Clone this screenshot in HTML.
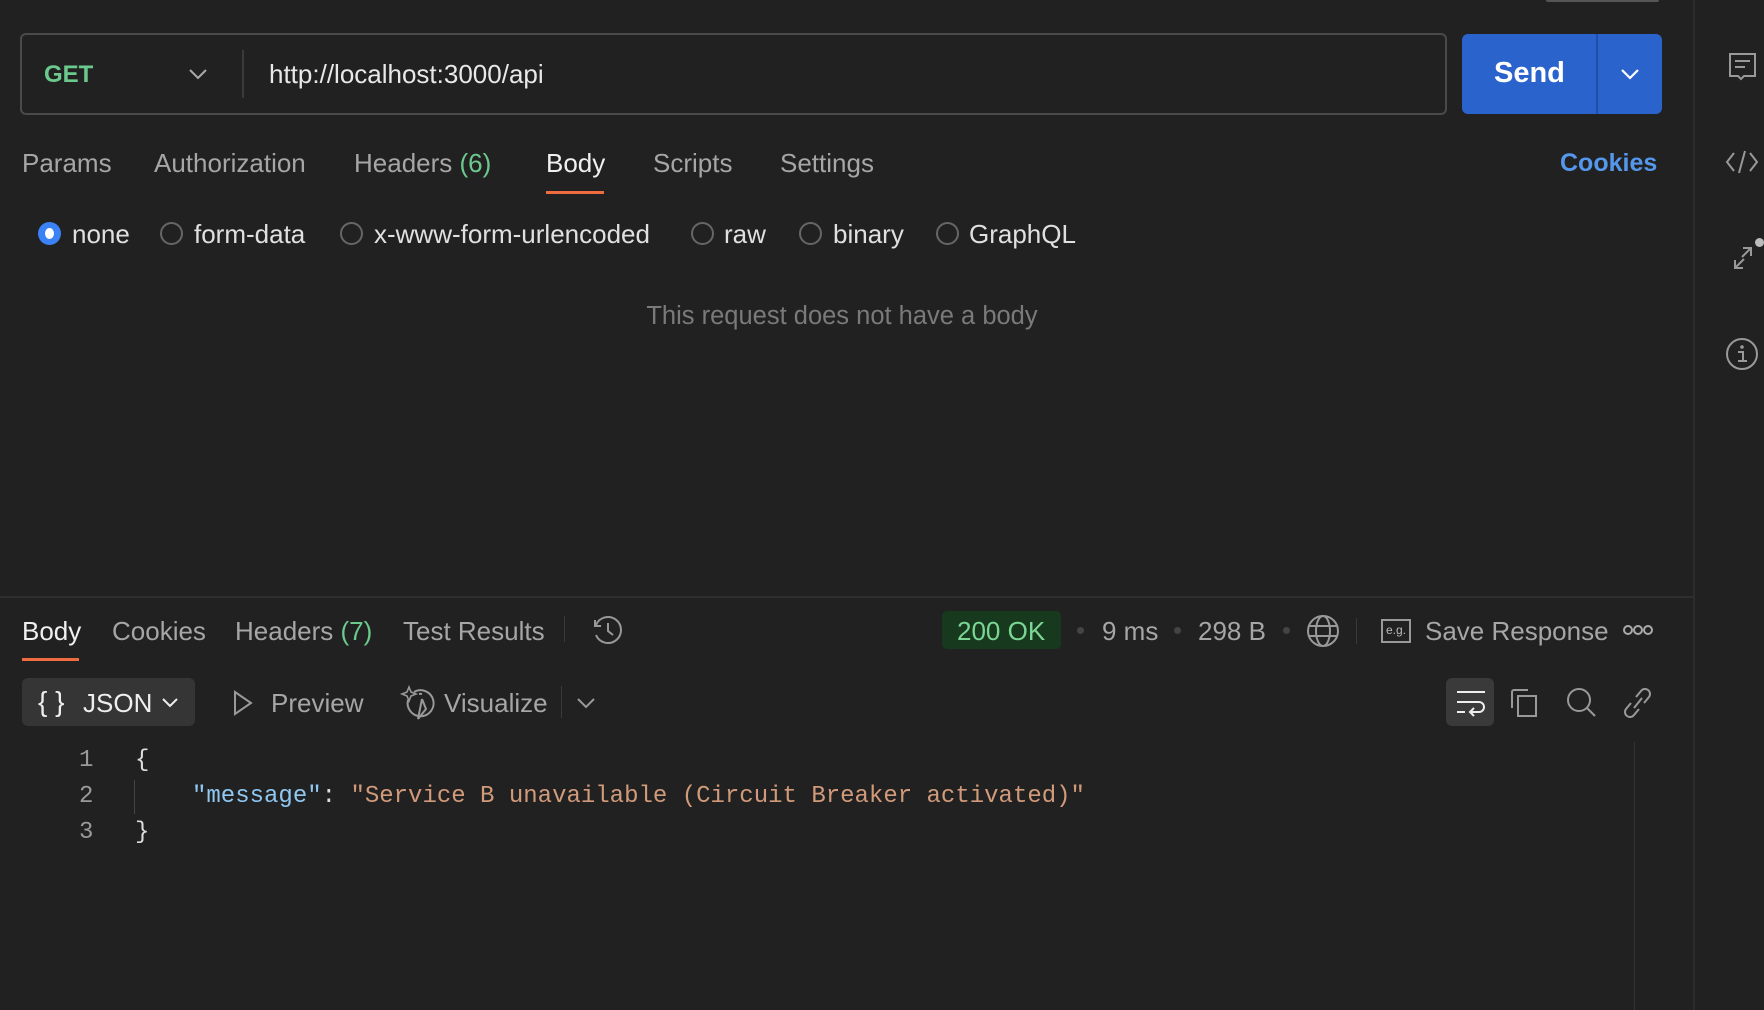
<!DOCTYPE html>
<html><head><meta charset="utf-8"><style>
*{margin:0;padding:0;box-sizing:border-box}
body{width:1764px;height:1010px;background:#212121;font-family:"Liberation Sans",sans-serif;color:#a6a6a6;position:relative;overflow:hidden}
.a{position:absolute;white-space:nowrap}
.t{font-size:26px;line-height:30px}
.m{position:absolute;font-family:"Liberation Mono",monospace;font-size:24px;line-height:30px;white-space:pre}
svg{position:absolute;overflow:visible}
</style></head><body>
<div class="a" style="left:1546px;top:0;width:113px;height:2px;background:#555;border-radius:0 0 2px 2px"></div>
<div class="a" style="left:20px;top:33px;width:1427px;height:82px;border:2px solid #4a4a4a;border-radius:6px"></div>
<div class="a" style="left:44px;top:61px;font-size:24px;font-weight:bold;color:#6cc98e">GET</div>
<svg style="left:189px;top:69px" width="18" height="10"><path d="M1 1l8 8 8-8" fill="none" stroke="#aaa" stroke-width="2"/></svg>
<div class="a" style="left:242px;top:50px;width:2px;height:48px;background:#3a3a3a"></div>
<div class="a" style="left:269px;top:59px;font-size:26px;color:#e8e8e8">http://localhost:3000/api</div>
<div class="a" style="left:1462px;top:34px;width:200px;height:80px;background:#2a63cc;border-radius:6px"></div>
<div class="a" style="left:1596px;top:34px;width:2px;height:80px;background:#1f4fa8"></div>
<div class="a" style="left:1494px;top:57px;font-size:29px;font-weight:bold;color:#fff">Send</div>
<svg style="left:1621px;top:69px" width="18" height="10"><path d="M1 1l8 8 8-8" fill="none" stroke="#fff" stroke-width="2.2"/></svg>
<div class="a" style="left:1693px;top:0;width:2px;height:1010px;background:#2c2c2c"></div>
<svg style="left:1728px;top:52px" width="28" height="28"><path d="M2 2h25v22h-11l-3 3-3-3h-8z M7 9h15 M7 15h10" fill="none" stroke="#999" stroke-width="2"/></svg>
<svg style="left:1726px;top:150px" width="32" height="24"><path d="M8 3l-7 9 7 9 M24 3l7 9-7 9 M19 1l-6 22" fill="none" stroke="#999" stroke-width="2"/></svg>
<svg style="left:1732px;top:246px" width="22" height="24"><path d="M10 11l9-9 M11 2h8v8 M12 13l-9 9 M3 14v8h8" fill="none" stroke="#999" stroke-width="2"/></svg>
<div class="a" style="left:1755px;top:238px;width:9px;height:9px;border-radius:50%;background:#bbb"></div>
<svg style="left:1726px;top:338px" width="32" height="32"><circle cx="16" cy="16" r="15" fill="none" stroke="#999" stroke-width="2"/><circle cx="16" cy="9" r="1.8" fill="#999"/><path d="M12 14h5v9 M12 23h9" fill="none" stroke="#999" stroke-width="2"/></svg>
<div class="a t" style="left:22px;top:148px">Params</div>
<div class="a t" style="left:154px;top:148px">Authorization</div>
<div class="a t" style="left:354px;top:148px">Headers <span style="color:#6cc98e">(6)</span></div>
<div class="a t" style="left:546px;top:148px;color:#f0f0f0">Body</div>
<div class="a" style="left:546px;top:191px;width:58px;height:3px;background:#ef6c40"></div>
<div class="a t" style="left:653px;top:148px">Scripts</div>
<div class="a t" style="left:780px;top:148px">Settings</div>
<div class="a t" style="left:1560px;top:148px;color:#5597ea;font-weight:bold;font-size:25px">Cookies</div>
<div class="a" style="left:38px;top:222px;width:23px;height:23px;border-radius:50%;background:#3b82f6"></div>
<div class="a" style="left:45px;top:228px;width:9px;height:11px;border-radius:50%;background:#fff"></div>
<div class="a t" style="left:72px;top:219px;color:#e0e0e0">none</div>
<div class="a" style="left:160px;top:222px;width:23px;height:23px;border-radius:50%;border:2px solid #666"></div>
<div class="a t" style="left:194px;top:219px;color:#e0e0e0">form-data</div>
<div class="a" style="left:340px;top:222px;width:23px;height:23px;border-radius:50%;border:2px solid #666"></div>
<div class="a t" style="left:374px;top:219px;color:#e0e0e0">x-www-form-urlencoded</div>
<div class="a" style="left:691px;top:222px;width:23px;height:23px;border-radius:50%;border:2px solid #666"></div>
<div class="a t" style="left:724px;top:219px;color:#e0e0e0">raw</div>
<div class="a" style="left:799px;top:222px;width:23px;height:23px;border-radius:50%;border:2px solid #666"></div>
<div class="a t" style="left:833px;top:219px;color:#e0e0e0">binary</div>
<div class="a" style="left:936px;top:222px;width:23px;height:23px;border-radius:50%;border:2px solid #666"></div>
<div class="a t" style="left:969px;top:219px;color:#e0e0e0">GraphQL</div>
<div class="a" style="left:0;top:302px;width:1684px;text-align:center;font-size:25.5px;color:#7a7a7a">This request does not have a body</div>
<div class="a" style="left:0;top:596px;width:1693px;height:2px;background:#2e2e2e"></div>
<div class="a t" style="left:22px;top:616px;color:#f0f0f0">Body</div>
<div class="a" style="left:22px;top:658px;width:57px;height:3px;background:#ef6c40"></div>
<div class="a t" style="left:112px;top:616px">Cookies</div>
<div class="a t" style="left:235px;top:616px">Headers <span style="color:#6cc98e">(7)</span></div>
<div class="a t" style="left:403px;top:616px">Test Results</div>
<div class="a" style="left:564px;top:616px;width:1px;height:26px;background:#3a3a3a"></div>
<svg style="left:592px;top:615px" width="30" height="30"><path d="M4 10A13 13 0 1 1 4 20 M3 5v6h6 M16 8v8l5 4" fill="none" stroke="#999" stroke-width="2"/></svg>
<div class="a" style="left:942px;top:611px;width:119px;height:38px;background:#173a1f;border-radius:5px"></div>
<div class="a t" style="left:957px;top:616px;color:#7bd694">200 OK</div>
<div class="a" style="left:1077px;top:627px;width:7px;height:7px;border-radius:50%;background:#444"></div>
<div class="a t" style="left:1102px;top:616px">9 ms</div>
<div class="a" style="left:1174px;top:627px;width:7px;height:7px;border-radius:50%;background:#444"></div>
<div class="a t" style="left:1198px;top:616px">298 B</div>
<div class="a" style="left:1283px;top:627px;width:7px;height:7px;border-radius:50%;background:#444"></div>
<svg style="left:1307px;top:615px" width="32" height="32"><circle cx="16" cy="16" r="15" fill="none" stroke="#999" stroke-width="2"/><ellipse cx="16" cy="16" rx="7" ry="15" fill="none" stroke="#999" stroke-width="2"/><path d="M2 11h28 M2 21h28" stroke="#999" stroke-width="2"/></svg>
<div class="a" style="left:1356px;top:618px;width:1px;height:26px;background:#3a3a3a"></div>
<div class="a" style="left:1381px;top:619px;width:30px;height:24px;border:2px solid #999;font-size:12px;line-height:19px;text-align:center;color:#bbb">e.g.</div>
<div class="a t" style="left:1425px;top:616px">Save Response</div>
<svg style="left:1623px;top:624px" width="30" height="12"><circle cx="5" cy="6" r="4" fill="none" stroke="#aaa" stroke-width="2"/><circle cx="15" cy="6" r="4" fill="none" stroke="#aaa" stroke-width="2"/><circle cx="25" cy="6" r="4" fill="none" stroke="#aaa" stroke-width="2"/></svg>
<div class="a" style="left:22px;top:678px;width:173px;height:48px;background:#353535;border-radius:6px"></div>
<div class="a" style="left:38px;top:686px;font-size:28px;color:#eee">{ }</div>
<div class="a t" style="left:83px;top:688px;color:#eee">JSON</div>
<svg style="left:162px;top:698px" width="16" height="9"><path d="M1 1l7 7 7-7" fill="none" stroke="#eee" stroke-width="2"/></svg>
<svg style="left:233px;top:690px" width="20" height="26"><path d="M2 2l16 11-16 11z" fill="none" stroke="#999" stroke-width="2"/></svg>
<div class="a t" style="left:271px;top:688px">Preview</div>
<svg style="left:402px;top:686px" width="32" height="34"><path d="M12 6A13 13 0 1 1 6 14 M20 8a13 13 0 0 0-3 0 M16 33l4-20 M20 13l4 10-8 10" fill="none" stroke="#999" stroke-width="2"/><path d="M7 1l2 5 5 2-5 2-2 5-2-5-5-2 5-2z" fill="none" stroke="#999" stroke-width="1.6"/></svg>
<div class="a t" style="left:444px;top:688px">Visualize</div>
<div class="a" style="left:561px;top:686px;width:1px;height:32px;background:#3a3a3a"></div>
<svg style="left:577px;top:698px" width="18" height="10"><path d="M1 1l8 8 8-8" fill="none" stroke="#999" stroke-width="2"/></svg>
<div class="a" style="left:1446px;top:678px;width:48px;height:48px;background:#3a3a3a;border-radius:6px"></div>
<svg style="left:1456px;top:690px" width="30" height="26"><path d="M1 2h28 M1 12h22a5 5 0 0 1 0 10h-8 M18 18l-4 4 4 4 M1 22h8" fill="none" stroke="#eee" stroke-width="2"/></svg>
<svg style="left:1510px;top:688px" width="30" height="30"><path d="M2 20V4a2 2 0 0 1 2-2h14 M8 8h18v20H8z" fill="none" stroke="#999" stroke-width="2"/></svg>
<svg style="left:1566px;top:687px" width="32" height="32"><circle cx="13" cy="13" r="11" fill="none" stroke="#999" stroke-width="2"/><path d="M21 21l8 8" stroke="#999" stroke-width="2"/></svg>
<svg style="left:1623px;top:687px" width="30" height="32"><path d="M13 10l5-6a5 5 0 0 1 8 6l-5 6 M16 22l-5 6a5 5 0 0 1-8-6l5-6 M11 21l8-10" fill="none" stroke="#999" stroke-width="2"/></svg>
<div class="a" style="left:1634px;top:742px;width:1px;height:268px;background:#333"></div>
<div class="m" style="left:79px;top:746px;color:#9a9a9a">1</div>
<div class="m" style="left:79px;top:782px;color:#9a9a9a">2</div>
<div class="m" style="left:79px;top:818px;color:#9a9a9a">3</div>
<div class="m" style="left:135px;top:746px;color:#ddd">{</div>
<div class="m" style="left:135px;top:818px;color:#ddd">}</div>
<div class="m" style="left:192px;top:782px"><span style="color:#8fc8f2">"message"</span><span style="color:#ddd">: </span><span style="color:#d19a7a">"Service B unavailable (Circuit Breaker activated)"</span></div>
<div class="a" style="left:134px;top:780px;width:1px;height:34px;background:#444"></div>
</body></html>
